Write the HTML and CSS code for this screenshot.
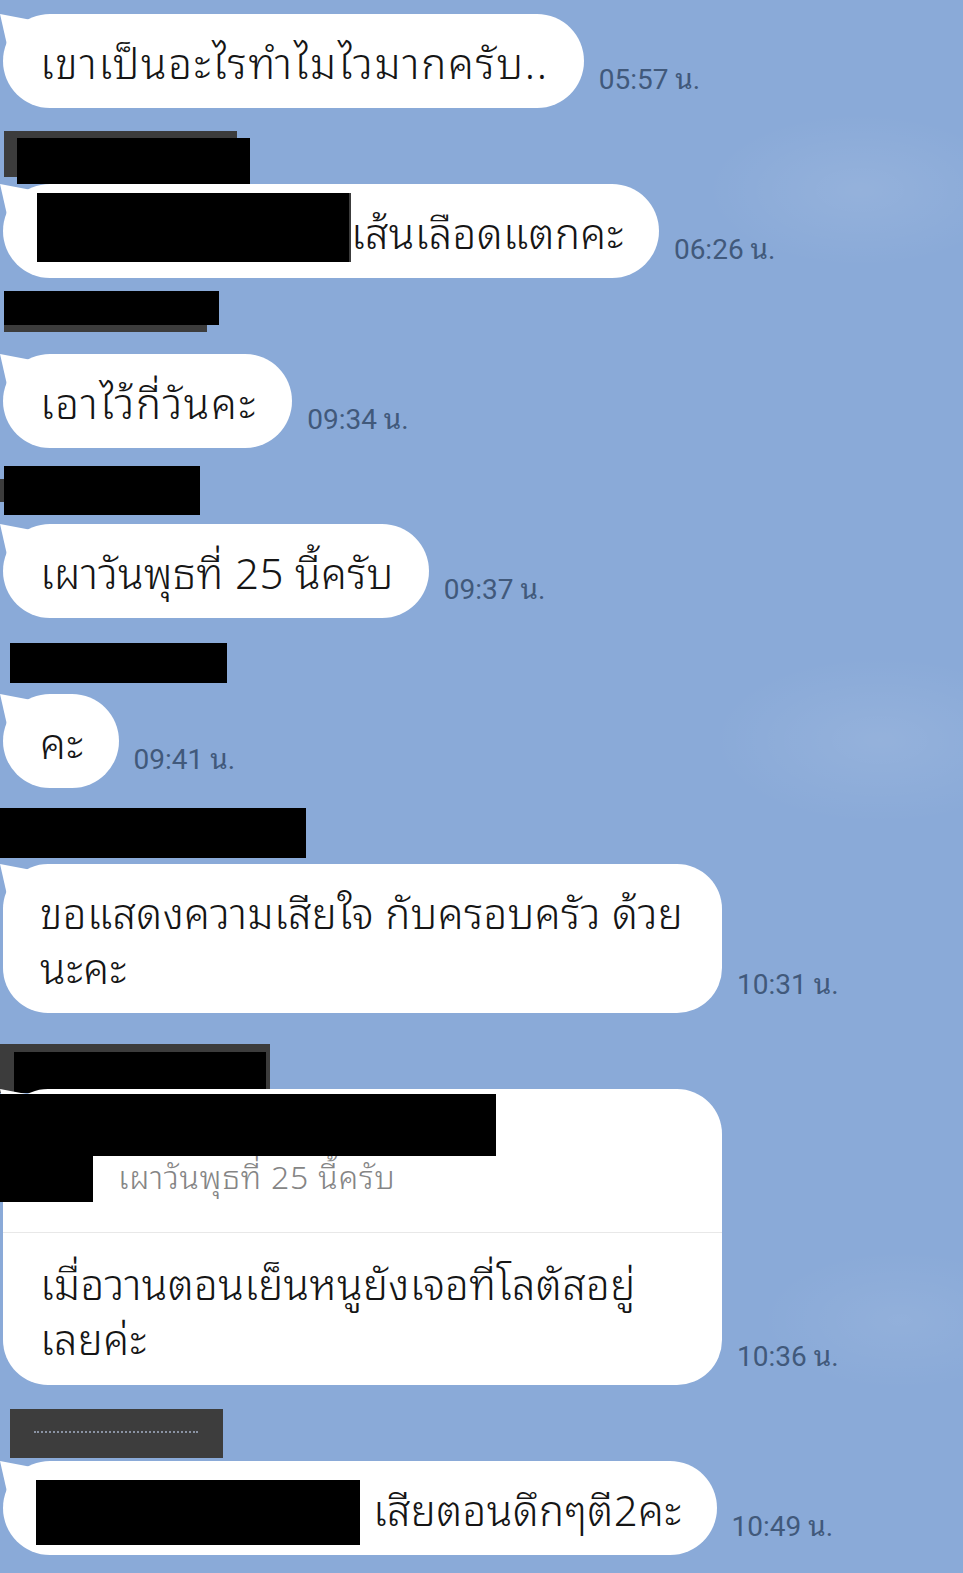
FILE: index.html
```html
<!DOCTYPE html>
<html lang="th">
<head>
	<meta charset="utf-8">
	<title>LINE chat</title>
	<link rel="stylesheet" href="styles.css">
</head>
<body>
	<div class="chat">

		<div class="msg first">
			<div class="row">
				<div class="bubble loose">เขาเป็นอะไรทำไมไวมากครับ..</div>
				<span class="time">05:57 น.</span>
			</div>
		</div>

		<div class="msg">
			<div class="name"><span class="redact n2"></span></div>
			<div class="row">
				<div class="bubble"><span class="redact inline b2"></span>เส้นเลือดแตกคะ</div>
				<span class="time">06:26 น.</span>
			</div>
		</div>

		<div class="msg">
			<div class="name"><span class="redact n3"></span></div>
			<div class="row">
				<div class="bubble loose">เอาไว้กี่วันคะ</div>
				<span class="time">09:34 น.</span>
			</div>
		</div>

		<div class="msg">
			<div class="name"><span class="redact n4"></span></div>
			<div class="row">
				<div class="bubble">เผาวันพุธที่ 25 นี้ครับ</div>
				<span class="time">09:37 น.</span>
			</div>
		</div>

		<div class="msg">
			<div class="name"><span class="redact n5"></span></div>
			<div class="row">
				<div class="bubble">คะ</div>
				<span class="time">09:41 น.</span>
			</div>
		</div>

		<div class="msg">
			<div class="name"><span class="redact n6"></span></div>
			<div class="row">
				<div class="bubble wide">ขอแสดงความเสียใจ กับครอบครัว ด้วย<br>นะคะ</div>
				<span class="time">10:31 น.</span>
			</div>
		</div>

		<div class="msg">
			<div class="name"><span class="redact n7"></span></div>
			<div class="row">
				<div class="bubble wide reply">
					<div class="quote">เผาวันพุธที่ 25 นี้ครับ</div>
					<div class="reply-body">เมื่อวานตอนเย็นหนูยังเจอที่โลตัสอยู่<br>เลยค่ะ</div>
					<span class="redact over o1"></span>
					<span class="redact over o2"></span>
				</div>
				<span class="time">10:36 น.</span>
			</div>
		</div>

		<div class="msg">
			<div class="name"><span class="redact n8"><span class="dots"></span></span></div>
			<div class="row">
				<div class="bubble"><span class="redact inline b8"></span>เสียตอนดึกๆตี2คะ</div>
				<span class="time">10:49 น.</span>
			</div>
		</div>

	</div>
</body>
</html>
```

FILE: styles.css
```css
html {
	background-color: #8aaad8;
}

body {
	margin: 0;
	min-height: 1573px;
	font-family: "Noto Sans Thai Looped", "Noto Sans Thai", Tahoma, "Noto Sans", sans-serif;
	background-color: #8aaad8;
	background-image:
		radial-gradient(ellipse 220px 110px at 860px 190px, rgba(255, 255, 255, 0.09), rgba(255, 255, 255, 0) 70%),
		radial-gradient(ellipse 240px 120px at 880px 740px, rgba(255, 255, 255, 0.09), rgba(255, 255, 255, 0) 70%),
		radial-gradient(ellipse 200px 100px at 900px 1320px, rgba(255, 255, 255, 0.07), rgba(255, 255, 255, 0) 70%);
}

.chat {
	padding-top: 14px;
}

.name {
	height: 76px;
	display: flex;
	align-items: flex-start;
}

.row {
	display: flex;
	align-items: flex-end;
	gap: 15px;
}

.bubble {
	position: relative;
	margin-left: 3px;
	padding: 19px 35px 20px 37px;
	background: #fff;
	color: #151515;
	border-radius: 47px;
	font-size: 42px;
	font-weight: 350;
	letter-spacing: 0.4px;
	line-height: 55px;
	white-space: nowrap;
}

.bubble.loose {
	letter-spacing: 1.7px;
}

/* little tail at the top left corner */
.bubble::before {
	content: "";
	position: absolute;
	left: -3px;
	top: 0;
	width: 34px;
	height: 30px;
	background: #fff;
	clip-path: polygon(0 0, 100% 22%, 100% 100%, 20% 100%);
}

.bubble.wide {
	width: 719px;
	box-sizing: border-box;
	border-radius: 45px;
}

.time {
	flex: none;
	font-family: Roboto, "Noto Sans Thai Looped", "Noto Sans Thai", sans-serif;
	font-size: 28px;
	line-height: 30px;
	color: #41597b;
	margin-bottom: 13px;
}

.redact {
	display: block;
	background: #000;
}

.redact.inline {
	display: inline-block;
	vertical-align: top;
}

.n2 {
	margin: 30px 0 0 17px;
	width: 233px;
	height: 46px;
	box-shadow: -13px -7px 0 #3c3c3c;
}

.b2 {
	width: 312px;
	height: 69px;
	margin: -10px 2px -4px -3px;
	box-shadow: 2px 0 0 #3c3c3c;
}

.n3 {
	margin: 13px 0 0 4px;
	width: 215px;
	height: 34px;
	box-shadow: -6px 13px 0 -6px #3c3c3c;
}

.n4 {
	margin: 18px 0 0 4px;
	width: 196px;
	height: 49px;
	box-shadow: -17px 0 0 -13px #3c3c3c;
}

.n5 {
	margin: 25px 0 0 10px;
	width: 217px;
	height: 40px;
}

.n6 {
	margin: 20px 0 0 0;
	width: 306px;
	height: 50px;
}

.n7 {
	margin: 31px 0 0 0;
	width: 266px;
	height: 49px;
	border-right: 4px solid #3c3c3c;
	box-shadow: inset 20px 14px 0 -6px #3c3c3c;
}

.n8 {
	margin: 24px 0 0 10px;
	width: 213px;
	height: 49px;
	background: #3d3d3d;
	position: relative;
}

.n8 .dots {
	position: absolute;
	left: 24px;
	top: 22px;
	width: 164px;
	border-top: 2px dotted #8a93a3;
}

.b8 {
	width: 324px;
	height: 65px;
	margin: 0 13px -10px -4px;
}

.reply {
	padding: 0;
	white-space: normal;
}

.quote {
	height: 144px;
	box-sizing: border-box;
	padding: 66px 0 0 115px;
	font-size: 32px;
	font-weight: 300;
	letter-spacing: 0.8px;
	line-height: 40px;
	color: #858585;
	border-bottom: 1px solid #e8e8e8;
	white-space: nowrap;
}

.reply-body {
	padding: 21px 37px 21px 37px;
}

.redact.over {
	position: absolute;
	left: -3px;
}

.o1 {
	top: 5px;
	width: 496px;
	height: 62px;
}

.o2 {
	top: 67px;
	width: 93px;
	height: 46px;
}
```
